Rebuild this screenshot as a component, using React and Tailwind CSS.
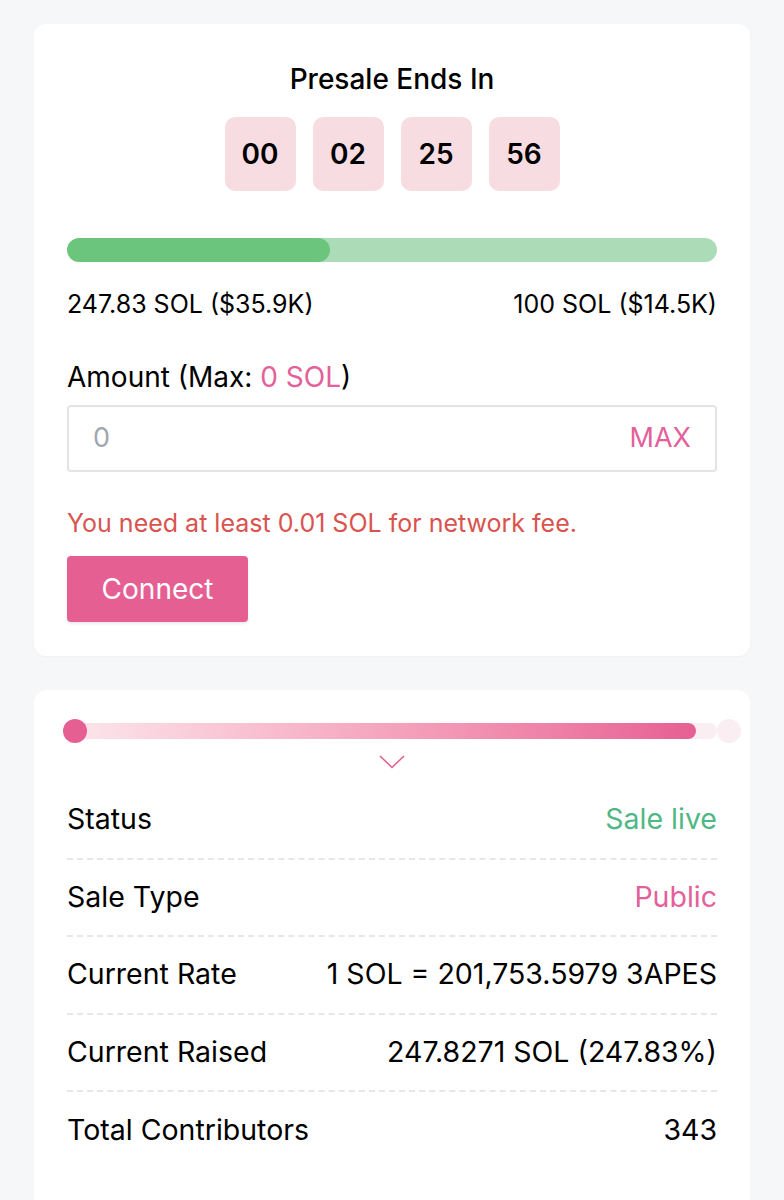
import React from "react";

const rows = [
  { label: "Status", value: "Sale live", color: "text-[#4fb884]" },
  { label: "Sale Type", value: "Public", color: "text-[#e4609a]" },
  { label: "Current Rate", value: "1 SOL = 201,753.5979 3APES", color: "text-black" },
  { label: "Current Raised", value: "247.8271 SOL (247.83%)", color: "text-black" },
  { label: "Total Contributors", value: "343", color: "text-black" },
];

function Countdown() {
  const parts = ["00", "02", "25", "56"];
  return (
    <div className="flex justify-center gap-[17px] mt-[19px]">
      {parts.map((p, i) => (
        <div
          key={i}
          className="w-[71px] h-[74px] rounded-[10px] bg-[#f7dce1] flex items-center justify-center text-[28px] font-semibold text-black"
        >
          {p}
        </div>
      ))}
    </div>
  );
}

export default function App() {
  return (
    <div
      className="min-h-[1200px] bg-[#f6f7f9] px-[34px] pt-[24px] text-black"
      style={{ fontFamily: "Inter, 'Noto Sans', sans-serif" }}
    >
      {/* Presale card */}
      <div className="bg-white rounded-[12px] px-[33px] pt-[36px] pb-[34px] shadow-[0_1px_2px_rgba(0,0,0,0.03)]">
        <div className="text-center text-[28px] font-medium leading-[38px]">Presale Ends In</div>
        <Countdown />

        <div className="mt-[47px] h-[24px] rounded-full bg-[#acdcb7] overflow-hidden">
          <div className="h-full w-[40.4%] rounded-full bg-[#6cc57d]" />
        </div>
        <div className="flex justify-between mt-[27px] text-[25px] leading-[30px]">
          <span>247.83 SOL ($35.9K)</span>
          <span>100 SOL ($14.5K)</span>
        </div>

        <div className="mt-[42px] text-[28px] leading-[32px]">
          Amount (Max: <span className="text-[#e4609a]">0 SOL</span>)
        </div>
        <div className="mt-[12px] h-[67px] border-2 border-[#e3e4e6] rounded-[4px] flex items-center justify-between px-[24px]">
          <span className="text-[27px] text-[#a0a6b0]">0</span>
          <span className="text-[27px] text-[#e4609a]">MAX</span>
        </div>

        <div className="mt-[36px] text-[25px] leading-[30px] text-[#d9534f]">
          You need at least 0.01 SOL for network fee.
        </div>
        <button className="mt-[18px] w-[181px] h-[66px] rounded-[4px] bg-[#e65f93] text-white text-[28px] shadow-[0_2px_3px_rgba(0,0,0,0.08)]">
          Connect
        </button>
      </div>

      {/* Info card */}
      <div className="mt-[34px] bg-white rounded-[12px] px-[33px] pt-[29px] pb-[40px]">
        <div className="relative h-[24px] flex items-center">
          <div className="absolute left-[8px] right-0 h-[16px] rounded-full bg-[#fbeef2]" />
          <div className="absolute left-[8px] right-[21px] h-[16px] rounded-full bg-gradient-to-r from-[#fbe5eb] to-[#e65f93]" />
          <div className="absolute left-[-4px] w-[24px] h-[24px] rounded-full bg-[#e65f93]" />
          <div className="absolute right-[-24px] w-[24px] h-[24px] rounded-full bg-[#fbeef2]" />
        </div>
        <div className="flex justify-center mt-[12px]">
          <svg width="26" height="14" viewBox="0 0 26 14" fill="none">
            <path d="M1 1 L13 12.5 L25 1" stroke="#e65f93" strokeWidth="1.6" />
          </svg>
        </div>

        <div className="mt-[13px]">
          {rows.map((r, i) => (
            <div
              key={r.label}
              className={
                "flex justify-between items-center h-[77.5px] text-[28.5px] " +
                (i < rows.length - 1 ? "border-b-2 border-dashed border-[#e6e7e9]" : "")
              }
            >
              <span>{r.label}</span>
              <span className={r.color}>{r.value}</span>
            </div>
          ))}
        </div>
      </div>
    </div>
  );
}
